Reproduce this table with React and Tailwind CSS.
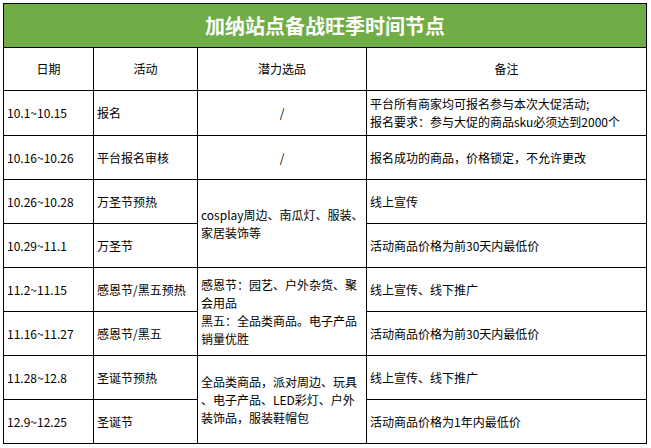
const rows = [
  { date: '10.1~10.15', act: '报名', pot: { text: ['/'], center: true }, note: ['平台所有商家均可报名参与本次大促活动;', '报名要求：参与大促的商品sku必须达到2000个'] },
  { date: '10.16~10.26', act: '平台报名审核', pot: { text: ['/'], center: true }, note: ['报名成功的商品，价格锁定，不允许更改'] },
  { date: '10.26~10.28', act: '万圣节预热', pot: { text: ['cosplay周边、南瓜灯、服装、', '家居装饰等'], span: true }, note: ['线上宣传'] },
  { date: '10.29~11.1', act: '万圣节', note: ['活动商品价格为前30天内最低价'] },
  { date: '11.2~11.15', act: '感恩节/黑五预热', pot: { text: ['感恩节：园艺、户外杂货、聚', '会用品', '黑五：全品类商品。电子产品', '销量优胜'], span: true }, note: ['线上宣传、线下推广'] },
  { date: '11.16~11.27', act: '感恩节/黑五', note: ['活动商品价格为前30天内最低价'] },
  { date: '11.28~12.8', act: '圣诞节预热', pot: { text: ['全品类商品，派对周边、玩具', '、电子产品、LED彩灯、户外', '装饰品，服装鞋帽包'], span: true }, note: ['线上宣传、线下推广'] },
  { date: '12.9~12.25', act: '圣诞节', note: ['活动商品价格为1年内最低价'] },
];

const cell = 'border-r border-b border-black flex items-center px-[3px] overflow-hidden';

export default function App() {
  return (
    <div
      className="bg-white w-[651px] h-[448px] p-[3px] text-black text-[12px] leading-[18px]"
      style={{ fontFamily: '"Noto Sans CJK SC", "Noto Sans", sans-serif' }}
    >
      <div className="grid grid-cols-[90px_104px_169px_280px] grid-rows-[44px_43px_45px_44px_44px_44px_44px_44px_44px_44px] w-[644px] border-l border-t border-black">
        <div className="col-span-4 bg-[#70ad47] border-r border-b border-black flex items-center justify-center text-white text-[20px] font-bold">
          加纳站点备战旺季时间节点
        </div>

        <div className={cell + ' justify-center'}>日期</div>
        <div className={cell + ' justify-center'}>活动</div>
        <div className={cell + ' justify-center'}>潜力选品</div>
        <div className={cell + ' justify-center'}>备注</div>

        {rows.map((r) => (
          <Row key={r.date} r={r} />
        ))}
      </div>
    </div>
  );
}

function Lines({ items }) {
  return (
    <div>
      {items.map((t) => (
        <div key={t} className="whitespace-nowrap">{t}</div>
      ))}
    </div>
  );
}

function Row({ r }) {
  return (
    <>
      <div className={cell + ' whitespace-nowrap'}>{r.date}</div>
      <div className={cell + ' whitespace-nowrap'}>{r.act}</div>
      {r.pot && (
        <div className={cell + (r.pot.span ? ' row-span-2' : '') + (r.pot.center ? ' justify-center' : '')}>
          <Lines items={r.pot.text} />
        </div>
      )}
      <div className={cell}>
        <Lines items={r.note} />
      </div>
    </>
  );
}
